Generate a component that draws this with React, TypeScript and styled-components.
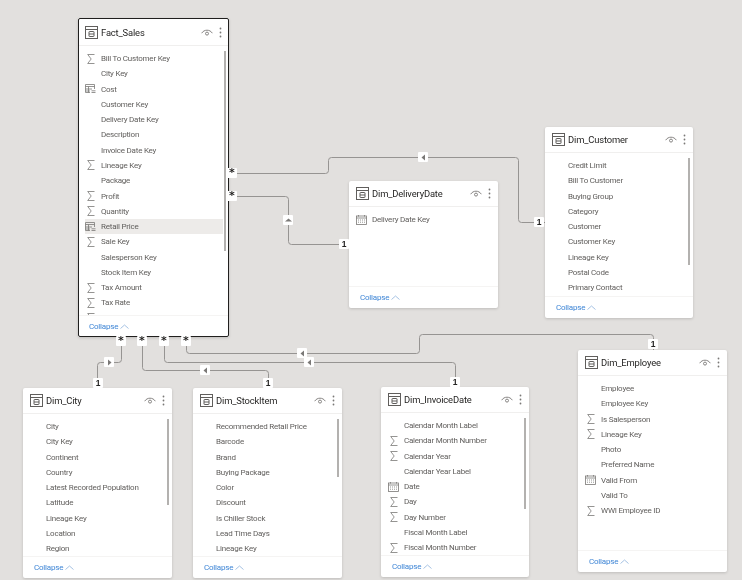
import React from 'react';
import styled, { createGlobalStyle } from 'styled-components';

type Kind = 'sigma' | 'calc' | 'date' | undefined;
type Field = { name: string; kind?: Kind; selected?: boolean };
type Table = {
    name: string;
    left: number;
    top: number;
    width: number;
    height: number;
    active?: boolean;
    thumb?: [number, number];
    fields: Field[];
};

const f = (name: string, kind?: Kind, selected?: boolean): Field => ({ name, kind, selected });

const tables: Table[] = [
    {
        name: 'Fact_Sales', left: 78, top: 18, width: 151, height: 319, active: true, thumb: [5, 200],
        fields: [
            f('Bill To Customer Key', 'sigma'), f('City Key'), f('Cost', 'calc'), f('Customer Key'),
            f('Delivery Date Key'), f('Description'), f('Invoice Date Key'), f('Lineage Key', 'sigma'),
            f('Package'), f('Profit', 'sigma'), f('Quantity', 'sigma'), f('Retail Price', 'calc', true),
            f('Sale Key', 'sigma'), f('Salesperson Key'), f('Stock Item Key'), f('Tax Amount', 'sigma'),
            f('Tax Rate', 'sigma'), f('Total Chiller Items', 'sigma'),
        ],
    },
    {
        name: 'Dim_DeliveryDate', left: 349, top: 181, width: 149, height: 127,
        fields: [f('Delivery Date Key', 'date')],
    },
    {
        name: 'Dim_Customer', left: 545, top: 127, width: 148, height: 191, thumb: [5, 107],
        fields: [
            f('Credit Limit'), f('Bill To Customer'), f('Buying Group'), f('Category'), f('Customer'),
            f('Customer Key'), f('Lineage Key'), f('Postal Code'), f('Primary Contact'),
        ],
    },
    {
        name: 'Dim_City', left: 23, top: 388, width: 149, height: 190, thumb: [5, 86],
        fields: [
            f('City'), f('City Key'), f('Continent'), f('Country'), f('Latest Recorded Population'),
            f('Latitude'), f('Lineage Key'), f('Location'), f('Region'),
        ],
    },
    {
        name: 'Dim_StockItem', left: 193, top: 388, width: 149, height: 190, thumb: [5, 58],
        fields: [
            f('Recommended Retail Price'), f('Barcode'), f('Brand'), f('Buying Package'), f('Color'),
            f('Discount'), f('Is Chiller Stock'), f('Lead Time Days'), f('Lineage Key'),
        ],
    },
    {
        name: 'Dim_InvoiceDate', left: 381, top: 387, width: 148, height: 190, thumb: [5, 91],
        fields: [
            f('Calendar Month Label'), f('Calendar Month Number', 'sigma'), f('Calendar Year', 'sigma'),
            f('Calendar Year Label'), f('Date', 'date'), f('Day', 'sigma'), f('Day Number', 'sigma'),
            f('Fiscal Month Label'), f('Fiscal Month Number', 'sigma'),
        ],
    },
    {
        name: 'Dim_Employee', left: 578, top: 350, width: 149, height: 222,
        fields: [
            f('Employee'), f('Employee Key'), f('Is Salesperson', 'sigma'), f('Lineage Key', 'sigma'),
            f('Photo'), f('Preferred Name'), f('Valid From', 'date'), f('Valid To'),
            f('WWI Employee ID', 'sigma'),
        ],
    },
];

const wires = [
    'M232 173H325Q328 173 328 170V160Q328 157 331 157H515Q518 157 518 160V219Q518 222 521 222H545',
    'M232 196H285Q288 196 288 199V241Q288 244 291 244H349',
    'M121 341V359Q121 362 118 362H100Q97 362 97 365V388',
    'M142 341V367Q142 370 145 370H265Q268 370 268 373V388',
    'M164 341V359Q164 362 167 362H452Q455 362 455 365V387',
    'M186 341V350Q186 353 189 353H416Q419 353 419 350V337Q419 334 422 334H650Q653 334 653 337V350',
];

type Marker = { x: number; y: number; label?: string; arrow?: 'left' | 'right' | 'up' };

const markers: Marker[] = [
    { x: 232, y: 173, label: '*' }, { x: 232, y: 196, label: '*' },
    { x: 121, y: 341, label: '*' }, { x: 142, y: 341, label: '*' },
    { x: 164, y: 341, label: '*' }, { x: 186, y: 341, label: '*' },
    { x: 539, y: 222, label: '1' }, { x: 344, y: 244, label: '1' },
    { x: 98, y: 383, label: '1' }, { x: 268, y: 383, label: '1' },
    { x: 455, y: 382, label: '1' }, { x: 653, y: 344, label: '1' },
    { x: 423, y: 157, arrow: 'left' }, { x: 288, y: 220, arrow: 'up' },
    { x: 109, y: 362, arrow: 'right' }, { x: 205, y: 370, arrow: 'left' },
    { x: 309, y: 362, arrow: 'left' }, { x: 302, y: 353, arrow: 'left' },
];

const TableIcon = () => (
    <svg width="13" height="13" viewBox="0 0 13 13" fill="none" stroke="#605e5c">
        <rect x="0.5" y="0.5" width="12" height="12" />
        <path d="M0.5 3.5H12.5" />
        <rect x="4" y="5.5" width="5" height="5" rx="0.5" />
        <path d="M4 8H9" />
    </svg>
);

const EyeIcon = () => (
    <svg width="12" height="9" viewBox="0 0 12 9" fill="none" stroke="#7a7876" strokeWidth="0.9">
        <path d="M0.7 5.2C3 1.2 9 1.2 11.3 5.2" />
        <circle cx="6" cy="5.6" r="1.5" />
    </svg>
);

const KebabIcon = () => (
    <svg width="3" height="11" viewBox="0 0 3 11" fill="#7a7876">
        <circle cx="1.5" cy="1.5" r="0.9" />
        <circle cx="1.5" cy="5.5" r="0.9" />
        <circle cx="1.5" cy="9.5" r="0.9" />
    </svg>
);

const FieldIcon = ({ kind }: { kind: Kind }) => {
    if (kind === 'sigma') {
        return (
            <svg width="8" height="10" viewBox="0 0 8 10" fill="none" stroke="#7a7876" strokeWidth="0.8">
                <path d="M7.5 0.5H0.7L4.2 5L0.7 9.5H7.5" />
            </svg>
        );
    }
    if (kind === 'calc') {
        return (
            <svg width="11" height="10" viewBox="0 0 11 10" fill="none" stroke="#7a7876" strokeWidth="0.8">
                <path d="M0.5 0.5H9.5V5M0.5 0.5V8.5H5M0.5 2.5H9.5M3.5 2.5V8.5M0.5 5H7M0.5 7H5" />
                <path d="M6.5 8.5H10.5M6.5 6.8H10.5" />
            </svg>
        );
    }
    if (kind === 'date') {
        return (
            <svg width="11" height="10" viewBox="0 0 11 10" fill="none" stroke="#7a7876" strokeWidth="0.8">
                <rect x="0.5" y="1" width="10" height="8.5" />
                <path d="M0.5 3H10.5M2.5 0V1.6M8.5 0V1.6" />
                <path d="M2 5H9M2 7.2H9" strokeDasharray="1 1" />
            </svg>
        );
    }
    return null;
};

const Chevron = () => (
    <svg width="9" height="5" viewBox="0 0 9 5" fill="none" stroke="#8fb3dc" strokeWidth="0.8">
        <path d="M0.5 4.5L4.5 1L8.5 4.5" />
    </svg>
);

const ArrowIcon = ({ dir }: { dir: 'left' | 'right' | 'up' }) => (
    <svg width="7" height="7" viewBox="0 0 7 7" fill="#7a7876">
        {dir === 'left' && <path d="M1.5 3.5L5 0.5V6.5Z" />}
        {dir === 'right' && <path d="M5.5 3.5L2 0.5V6.5Z" />}
        {dir === 'up' && <path d="M3.5 1.5L7 4.5H0Z" />}
    </svg>
);

const App = () => {
    return (
        <>
            <GlobalStyle />
            <Canvas>
                <Wires width="742" height="580" viewBox="0 0 742 580" fill="none" stroke="#969492" strokeWidth="1">
                    <g transform="translate(0.5 0.5)">
                        {wires.map((d) => (
                            <path key={d} d={d} />
                        ))}
                    </g>
                </Wires>
                {tables.map((table) => (
                    <Card
                        key={table.name}
                        $left={table.left}
                        $top={table.top}
                        $width={table.width}
                        $height={table.height}
                        $active={table.active}
                    >
                        <Header>
                            <TableIcon />
                            <Title>{table.name}</Title>
                            <HeaderTools>
                                <EyeIcon />
                                <KebabIcon />
                            </HeaderTools>
                        </Header>
                        <List>
                            {table.fields.map((field) => (
                                <Row key={field.name} $selected={field.selected}>
                                    <IconSlot>
                                        <FieldIcon kind={field.kind} />
                                    </IconSlot>
                                    <span>{field.name}</span>
                                </Row>
                            ))}
                            {table.thumb && <Thumb $top={table.thumb[0]} $height={table.thumb[1]} />}
                        </List>
                        <Footer>
                            Collapse <Chevron />
                        </Footer>
                    </Card>
                ))}
                {markers.map((m) => (
                    <Badge key={`${m.x}-${m.y}`} $x={m.x} $y={m.y} $star={m.label === '*'}>
                        {m.arrow ? <ArrowIcon dir={m.arrow} /> : m.label}
                    </Badge>
                ))}
            </Canvas>
        </>
    );
};
export default App;

const GlobalStyle = createGlobalStyle`
    html, body {
        margin: 0;
        background: #e2e0de;
        overflow: hidden;
    }
`;

const Canvas = styled.div`
    position: relative;
    width: 742px;
    height: 580px;
    overflow: hidden;
    background: #e2e0de;
    font-family: 'Roboto', 'Noto Sans', sans-serif;
    filter: blur(0.45px);
`;

const Wires = styled.svg`
    position: absolute;
    top: 0;
    left: 0;
`;

const Card = styled.div<{ $left: number; $top: number; $width: number; $height: number; $active?: boolean }>`
    position: absolute;
    left: ${(p) => p.$left}px;
    top: ${(p) => p.$top}px;
    width: ${(p) => p.$width}px;
    height: ${(p) => p.$height}px;
    box-sizing: border-box;
    display: flex;
    flex-direction: column;
    padding-top: ${(p) => (p.$active ? '2px' : '0')};
    background: #ffffff;
    border-radius: 2px;
    outline: ${(p) => (p.$active ? '1.5px solid #201f1e' : 'none')};
    outline-offset: -1.5px;
    box-shadow: 0 1px 3px rgba(0, 0, 0, 0.16);
`;

const Header = styled.div`
    flex: 0 0 25px;
    display: flex;
    align-items: center;
    gap: 3px;
    padding: 0 7px;
    border-bottom: 1px solid #f0efee;
`;

const Title = styled.div`
    flex: 1;
    font-size: 9.4px;
    letter-spacing: -0.15px;
    color: #252423;
`;

const HeaderTools = styled.div`
    display: flex;
    align-items: center;
    gap: 6px;
`;

const List = styled.div`
    flex: 1;
    position: relative;
    overflow: hidden;
    padding-top: 5px;
`;

const Row = styled.div<{ $selected?: boolean }>`
    height: 15.27px;
    margin: 0 6px 0 7px;
    display: flex;
    align-items: center;
    font-size: 8px;
    letter-spacing: -0.22px;
    color: #605e5c;
    white-space: nowrap;
    background: ${(p) => (p.$selected ? '#edebe9' : 'transparent')};
`;

const IconSlot = styled.div`
    flex: 0 0 11px;
    margin-right: 5px;
    display: flex;
    justify-content: center;
    align-items: center;
`;

const Thumb = styled.div<{ $top: number; $height: number }>`
    position: absolute;
    right: 3px;
    top: ${(p) => p.$top}px;
    width: 2px;
    height: ${(p) => p.$height}px;
    background: #b3b1af;
`;

const Footer = styled.div`
    flex: 0 0 21px;
    display: flex;
    align-items: center;
    gap: 2px;
    padding-left: 11px;
    border-top: 1px solid #f5f4f3;
    font-size: 8px;
    letter-spacing: -0.2px;
    color: #3f86d6;
`;

const Badge = styled.div<{ $x: number; $y: number; $star?: boolean }>`
    position: absolute;
    left: ${(p) => p.$x - 5}px;
    top: ${(p) => p.$y - 5}px;
    width: 10px;
    height: 10px;
    border-radius: 1px;
    background: #ffffff;
    display: flex;
    align-items: ${(p) => (p.$star ? 'flex-start' : 'center')};
    justify-content: center;
    font-family: ${(p) => (p.$star ? "'DejaVu Sans'" : "'Liberation Sans'")}, sans-serif;
    font-size: ${(p) => (p.$star ? '11px' : '8.5px')};
    font-weight: 700;
    color: #252423;
    line-height: 10px;
`;
